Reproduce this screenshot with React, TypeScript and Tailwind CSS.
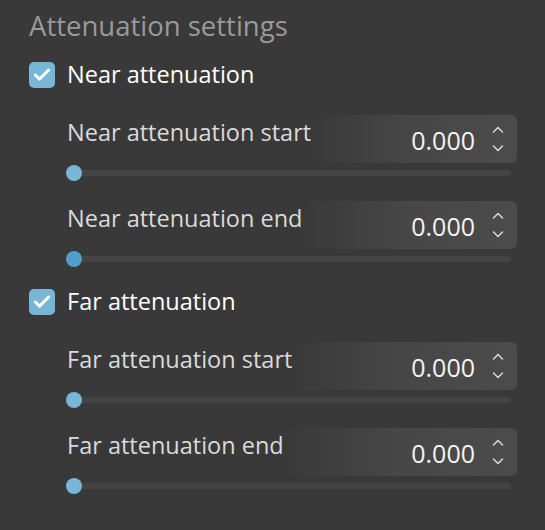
import { Check } from "lucide-react";

type Item = { label: string; active?: boolean };

const groups: { title: string; items: Item[] }[] = [
  {
    title: "Near attenuation",
    items: [{ label: "Near attenuation start" }, { label: "Near attenuation end", active: true }],
  },
  {
    title: "Far attenuation",
    items: [{ label: "Far attenuation start" }, { label: "Far attenuation end" }],
  },
];

function Chevrons() {
  return (
    <svg width="12" height="30" viewBox="0 0 12 30" fill="none" stroke="#d4d4d4" strokeWidth="1.6" strokeLinecap="round" strokeLinejoin="round">
      <path d="M1.5 8 L6 3.5 L10.5 8" />
      <path d="M1.5 22 L6 26.5 L10.5 22" />
    </svg>
  );
}

function NumberRow({ label, active }: Item) {
  return (
    <div className="flex flex-col">
      <div className="flex h-[48px] items-start">
        <div className="shrink-0 whitespace-nowrap pt-[2px] text-[23.5px] leading-[30px] text-[#dadada]">{label}</div>
        <div className="flex h-[48px] min-w-0 flex-1 items-center justify-end rounded-[6px] bg-gradient-to-r from-[#393939] via-[#474747] to-[#4b4b4b] pr-[13px]">
          <span className="mr-[17px] mt-[3px] text-[25px] text-[#f4f4f4]">0.000</span>
          <Chevrons />
        </div>
      </div>
      <div className="relative mt-[7px] h-[6px] w-[444px] rounded-full bg-[#444444]">
        <div
          className={
            "absolute left-[-1px] top-[-5px] h-[16px] w-[16px] rounded-full " +
            (active ? "bg-[#529fcb]" : "bg-[#79b5d6]")
          }
        />
      </div>
    </div>
  );
}

export default function App() {
  return (
    <div
      className="h-[530px] w-[545px] bg-[#393939] pl-[29px] pr-[28px] pt-[8px]"
      style={{ fontFamily: '"Open Sans", "Noto Sans", sans-serif' }}
    >
      <div className="text-[27.5px] leading-[36px] text-[#999999]">Attenuation settings</div>
      <div className="mt-[18px] flex flex-col gap-[27px]">
        {groups.map((g) => (
          <div key={g.title} className="flex flex-col gap-[27px]">
            <div className="flex h-[26px] items-center gap-[12px]">
              <div className="flex h-[26px] w-[26px] items-center justify-center rounded-[5px] bg-[#78b6d6]">
                <Check size={20} strokeWidth={3.6} color="#ffffff" />
              </div>
              <span className="text-[23.5px] text-white">{g.title}</span>
            </div>
            <div className="ml-[38px] flex flex-col gap-[25px]">
              {g.items.map((it) => (
                <NumberRow key={it.label} {...it} />
              ))}
            </div>
          </div>
        ))}
      </div>
    </div>
  );
}
